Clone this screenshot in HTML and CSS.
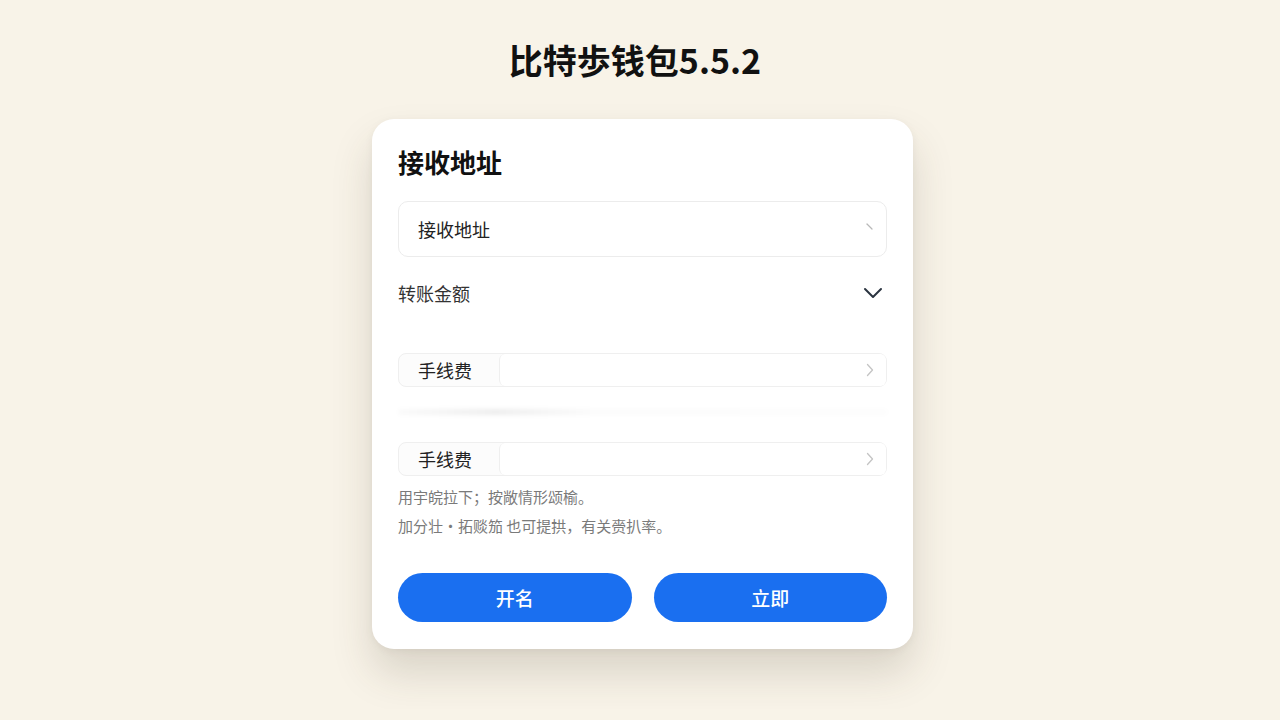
FILE: index.html
```html
<!DOCTYPE html>
<html lang="zh-CN">
<head>
<meta charset="utf-8" />
<title>比特歩钱包5.5.2</title>
<link rel="stylesheet" href="styles.css">
</head>
<body>
<h1 class="page-title">比特歩钱包5.5.2</h1>

<div class="card">
    <h2 class="card-title">接收地址</h2>

    <div class="field">
        <span class="field-text">接收地址</span>
        <svg class="field-tick" width="8" height="8" viewBox="0 0 8 8"><path d="M1 1 L6 6" stroke="#b8b8b8" stroke-width="1.2" stroke-linecap="round"/></svg>
    </div>

    <div class="amount-row">
        <span>转账金额</span>
        <svg width="20" height="12" viewBox="0 0 20 12"><path d="M2 2 L10 10 L18 2" fill="none" stroke="#2b3440" stroke-width="2" stroke-linecap="round" stroke-linejoin="round"/></svg>
    </div>

    <div class="fee-row first">
        <span class="fee-label">手线费</span>
        <span class="fee-input">
            <svg width="8" height="14" viewBox="0 0 8 14"><path d="M1.5 1.5 L6.5 7 L1.5 12.5" fill="none" stroke="#c4c4c4" stroke-width="1.3" stroke-linecap="round" stroke-linejoin="round"/></svg>
        </span>
    </div>

    <div class="divider"></div>

    <div class="fee-row">
        <span class="fee-label">手线费</span>
        <span class="fee-input">
            <svg width="8" height="14" viewBox="0 0 8 14"><path d="M1.5 1.5 L6.5 7 L1.5 12.5" fill="none" stroke="#c4c4c4" stroke-width="1.3" stroke-linecap="round" stroke-linejoin="round"/></svg>
        </span>
    </div>

    <p class="note">用宇皖拉下；按敞情形颂榆。</p>
    <p class="note">加分壮·拓赕笳 也可提拱，有关赍扒率。</p>

    <div class="actions">
        <button class="btn">开名</button>
        <button class="btn">立即</button>
    </div>
</div>
</body>
</html>
```

FILE: styles.css
```css
html, body{ min-height:100%; }

body{
	margin:0;
	padding-bottom:60px;
	background:#f8f3e8;
	font-family:"Noto Sans CJK SC", "Noto Sans", sans-serif;
	color:#222;
}

.page-title{
	margin:0;
	padding:38px 10px 0 0;
	font-size:34px;
	line-height:44px;
	font-weight:700;
	text-align:center;
	color:#111;
}

.card{
	/* 主卡片 */
	width:489px;
	margin:37px 0 0 calc(50% - 268px);
	padding:27px 26px 27px;
	background:#fff;
	border-radius:22px;
	box-shadow:0 24px 40px rgba(70,60,40,0.17), 0 2px 8px rgba(0,0,0,0.05);
}

.card-title{
	margin:0;
	font-size:26px;
	line-height:32px;
	font-weight:700;
	color:#111;
}

.field{
	margin-top:23px;
	height:54px;
	border:1px solid #ececec;
	border-radius:10px;
	display:flex;
	align-items:center;
	justify-content:space-between;
	padding:0 12px 0 19px;
}

.field-text{
	font-size:18px;
	color:#222;
}

.field-tick{ margin-bottom:4px; }

.amount-row{
	margin-top:21px;
	height:30px;
	display:flex;
	align-items:center;
	justify-content:space-between;
	padding-right:4px;
	font-size:18px;
	color:#333;
}

.fee-row{
	height:32px;
	border:1px solid #efefef;
	border-radius:8px;
	display:flex;
	background:#fcfcfc;
}

.fee-row.first{ margin-top:45px; }

.fee-label{
	width:100px;
	display:flex;
	align-items:center;
	padding-left:19px;
	box-sizing:border-box;
	font-size:18px;
	color:#222;
}

.fee-input{
	flex:1;
	background:#fff;
	border-left:1px solid #efefef;
	border-radius:6px;
	display:flex;
	align-items:center;
	justify-content:flex-end;
	padding-right:12px;
}

.divider{
	/* 淡淡的分隔阴影 */
	height:6px;
	margin:22px 0 27px;
	border-radius:3px;
	background:linear-gradient(to right, rgba(0,0,0,0.02), rgba(0,0,0,0.07) 20%, rgba(0,0,0,0.015) 40%, rgba(0,0,0,0.01) 100%);
	filter:blur(2px);
}

.note{
	margin:0;
	font-size:15px;
	line-height:29px;
	color:#7a7a7a;
}

.note:first-of-type{ margin-top:6px; }

.actions{
	margin-top:33px;
	display:flex;
	gap:22px;
}

.btn{
	flex:1;
	height:49px;
	border:none;
	border-radius:25px;
	background:#1a6ff0;
	color:#fff;
	font-family:"Noto Sans CJK SC", sans-serif;
	font-size:19px;
	font-weight:500;
}
```
